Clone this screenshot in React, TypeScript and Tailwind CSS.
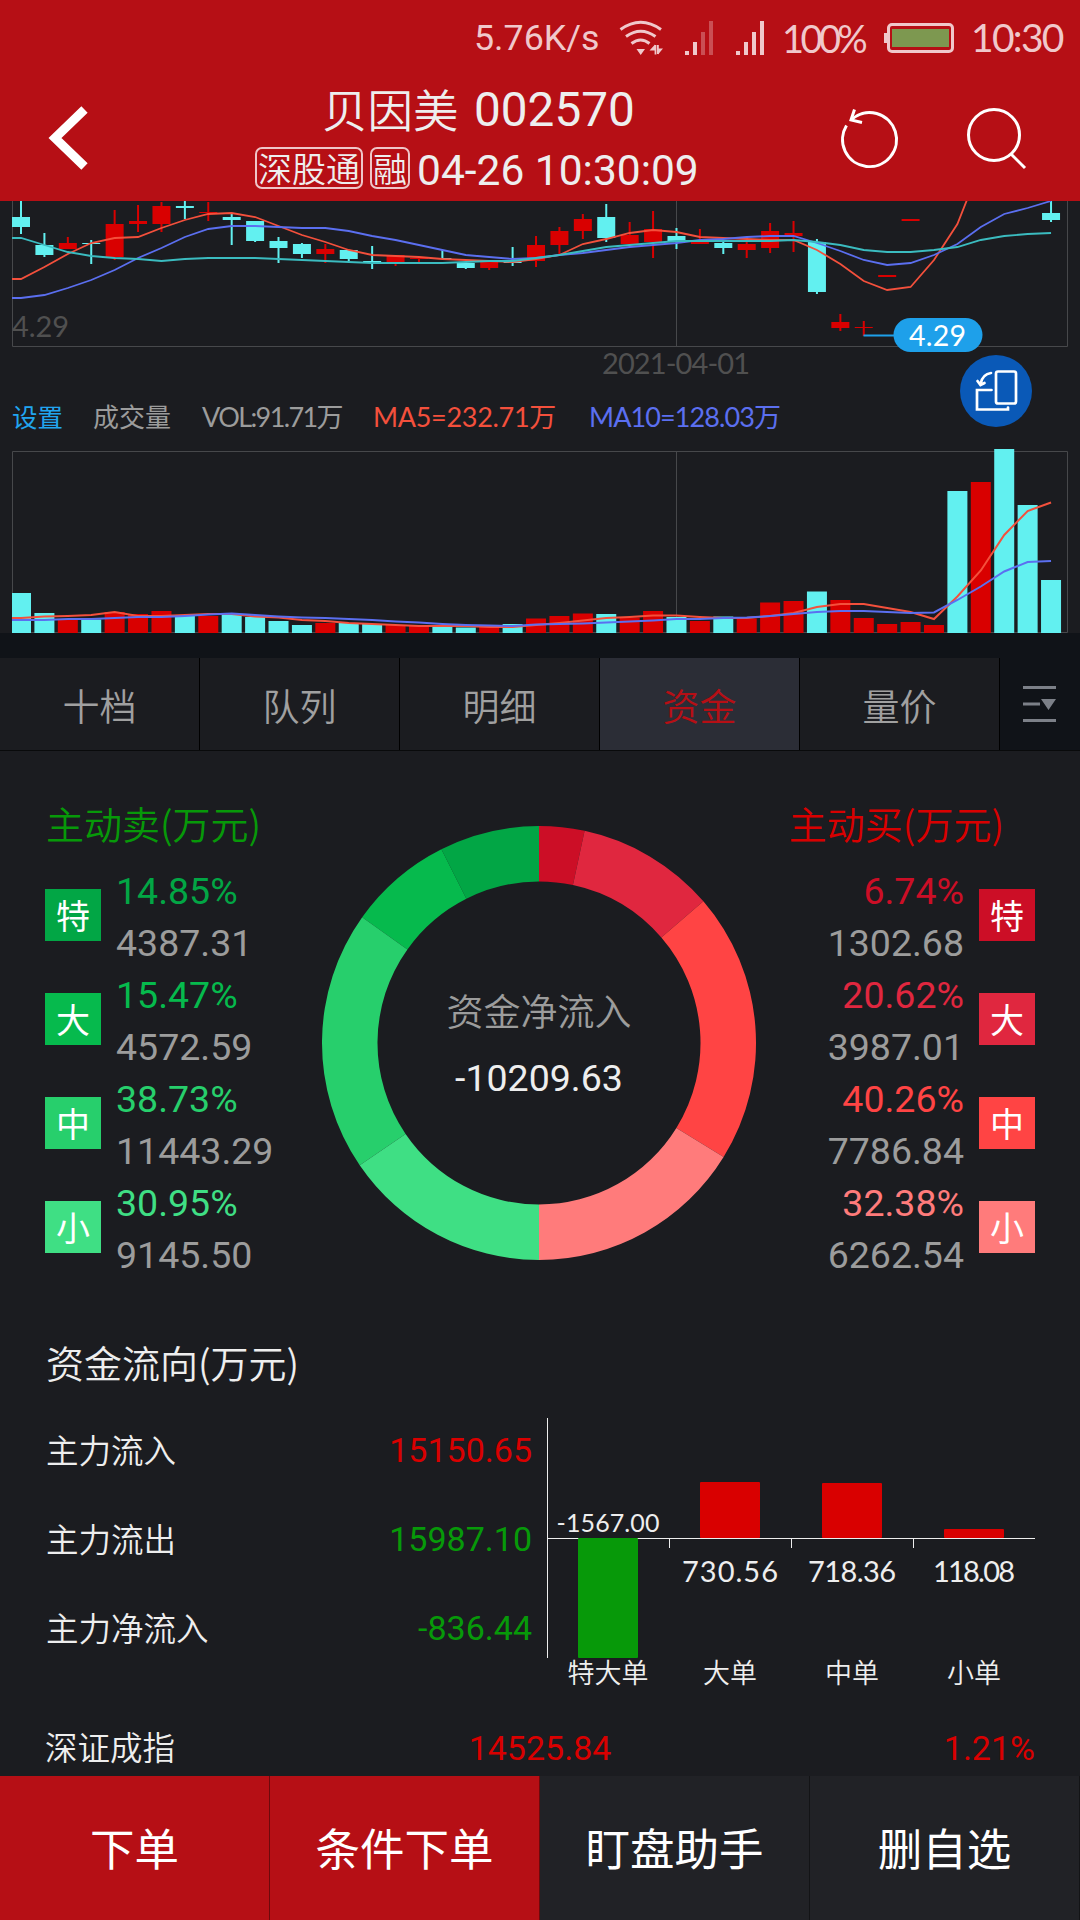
import type { ReactNode } from 'react'

type Candle = [color: string, high: number, top: number, bottom: number, low: number] | null

const UP = '#d90000'
const DOWN = '#62f0f0'
const STEP = 23.41

const r = (high: number, top: number, bottom: number, low: number): Candle => [UP, high, top, bottom, low]
const c = (high: number, top: number, bottom: number, low: number): Candle => [DOWN, high, top, bottom, low]

const candles: Candle[] = [
  c(201, 217, 227, 234), c(233, 245, 255, 257), r(237, 243, 249, 249), c(240, 243, 244, 264),
  r(210, 224, 257, 260), r(205, 221, 224, 232), r(202, 206, 224, 232), c(201, 206, 208, 219),
  r(202, 212, 213, 221), c(214, 217, 220, 245), c(221, 221, 241, 242), c(237, 241, 248, 263),
  c(243, 244, 254, 258), r(244, 249, 254, 263), c(250, 250, 259, 261), c(246, 261, 263, 269),
  r(255, 255, 263, 266), r(258, 258, 259, 264), c(250, 258, 259, 259), c(263, 263, 268, 269),
  r(262, 262, 268, 270), c(247, 262, 263, 266), r(236, 245, 261, 267), r(227, 231, 245, 254),
  r(214, 219, 231, 239), c(204, 217, 238, 242), r(222, 235, 244, 247), r(211, 229, 242, 258),
  c(228, 236, 241, 249), r(229, 242, 244, 244), c(242, 243, 248, 254), r(242, 244, 250, 258),
  r(223, 231, 248, 253), r(221, 233, 236, 252), c(239, 242, 292, 294), r(314, 322, 328, 331),
  r(321, 327, 328, 336), r(275, 275, 277, 277), r(219, 219, 221, 221),
  null, null, null, null, null,
  c(201, 213, 220, 222),
]

const priceLines = [
  { color: '#f4503c', values: [279, 267, 254, 243, 238, 237, 228, 220, 214, 213, 217, 226, 235, 242, 250, 255, 256, 257, 259, 260, 261, 262, 259, 255, 244, 239, 233, 230, 232, 237, 238, 239, 240, 240, 250, 264, 281, 290, 287, 260, 224, 165] },
  { color: '#5b6ff0', values: [298, 295, 288, 280, 270, 258, 248, 237, 229, 226, 226, 227, 228, 228, 231, 236, 240, 245, 250, 255, 257, 259, 258, 255, 253, 250, 247, 245, 243, 240, 239, 237, 236, 236, 243, 251, 260, 265, 263, 255, 244, 227, 214, 208, 201] },
  { color: '#3bbcc0', values: [238, 245, 252, 256, 258, 259, 261, 259, 258, 258, 258, 259, 260, 261, 262, 263, 263, 263, 263, 262, 261, 261, 258, 255, 251, 247, 245, 243, 241, 241, 241, 241, 241, 240, 242, 245, 250, 252, 252, 250, 247, 240, 236, 234, 233] },
]

const volumes: [number, boolean][] = [
  [593, false], [613, false], [619.5, true], [619.5, false], [612, true], [614, true], [611, true],
  [616, false], [616, true], [615, false], [617, false], [621, false], [625, false], [623, true],
  [623, false], [624, false], [625, true], [626, true], [627, false], [627.5, false], [627, true],
  [624, false], [618.5, true], [616, true], [613.5, true], [614, false], [617.5, true], [611, true],
  [617, false], [621, true], [616.5, false], [618.5, true], [602.5, true], [601, true], [591.5, false],
  [600, true], [618, true], [624, true], [622, true], [625, true], [491, false], [482, true],
  [449, false], [505, false], [580, false],
]

const volumeLines = [
  { color: '#f4503c', values: [618, 616.5, 616, 615, 612, 616, 616, 615, 614, 614, 616.5, 617.5, 620, 621, 623, 624, 625, 626, 626, 626, 627, 627, 625, 623, 620.5, 618, 617, 615.5, 615.5, 617, 618, 618, 616, 613, 607, 604, 604, 608, 612, 619, 596.5, 570.5, 535, 511, 502.5] },
  { color: '#5b6ff0', values: [620, 620, 619, 619, 618, 617, 617, 616, 614.5, 613.5, 615, 616.5, 617.5, 618, 619, 620, 621.5, 622.5, 624, 625, 625.5, 626, 624.5, 624, 623.5, 622.5, 621.5, 620.5, 619, 619, 618, 617.5, 616, 614, 612, 611, 611, 612, 613, 612.5, 600, 586.5, 571.5, 562, 561] },
]

const sells = [
  { label: '特', percent: 14.85, amount: '4387.31', fill: '#02a645', bg: 'bg-[#02a645]', text: 'text-[#02a645]' },
  { label: '大', percent: 15.47, amount: '4572.59', fill: '#06ba4d', bg: 'bg-[#06ba4d]', text: 'text-[#06ba4d]' },
  { label: '中', percent: 38.73, amount: '11443.29', fill: '#27cf6c', bg: 'bg-[#27cf6c]', text: 'text-[#27cf6c]' },
  { label: '小', percent: 30.95, amount: '9145.50', fill: '#3fdf84', bg: 'bg-[#3fdf84]', text: 'text-[#3fdf84]' },
]

const buys = [
  { label: '特', percent: 6.74, amount: '1302.68', fill: '#cc0e26', bg: 'bg-[#cc0e26]', text: 'text-[#cc0e26]' },
  { label: '大', percent: 20.62, amount: '3987.01', fill: '#e0273f', bg: 'bg-[#e0273f]', text: 'text-[#e0273f]' },
  { label: '中', percent: 40.26, amount: '7786.84', fill: '#ff4444', bg: 'bg-[#ff4444]', text: 'text-[#ff4444]' },
  { label: '小', percent: 32.38, amount: '6262.54', fill: '#ff7b7b', bg: 'bg-[#ff7b7b]', text: 'text-[#ff7b7b]' },
]

const x = (i: number) => 21 + i * STEP

function linePoints(values: number[]) {
  return `12,${values[0]} ` + values.map((v, i) => `${x(i)},${v}`).join(' ')
}

function Num({ children, className = '' }: { children: ReactNode; className?: string }) {
  return <span className={`font-['Roboto',sans-serif] font-normal ${className}`}>{children}</span>
}

function StatusBar() {
  return (
    <div className="flex h-[76px] items-center text-[#f0c8cb]">
      <Num className="mt-[2px] ml-[474px] w-[144px] text-[35.800px] leading-none">5.76K/s</Num>
      <svg className="mt-[-1px] h-9 w-[46px]" viewBox="618 19 46 36" fill="none" stroke="currentColor" strokeWidth="3">
        <path d="M620.500 28.500Q640.700 14 661 28.500M626 35.500Q640.700 25 655.500 35.500M631.500 42.500Q640.700 35.500 649.500 42.500" />
        <path d="M636.500 48H645L640.700 54ZM649.500 49.500L655 43.500V49.500ZM658 47.500H663L658 53.500Z" fill="currentColor" stroke="none" />
        <path d="M655.500 44V53.500M657.900 44V53" strokeWidth="1.800" />
      </svg>
      <svg className="ml-[21px] h-[34px] w-[80px]" viewBox="685 20 80 34" fill="currentColor">
        <path d="M685 50h4v4h-4zM693 41h4v13h-4zM736 50h4v4h-4zM744 41h4v13h-4zM752 31h4v23h-4zM760 20h4v34h-4z" />
        <path d="M701 31h4v23h-4zM709 20h4v34h-4z" opacity=".35" />
      </svg>
      <span className="ml-[17px] w-[102px] pb-[1px] font-['Lato',sans-serif] text-[38px] leading-none font-normal tracking-[-3.6px]">100%</span>
      <svg className="h-[30px] w-[70px]" viewBox="884 22 70 30">
        <rect x="884" y="32" width="5" height="10" fill="#f0c8cb" />
        <rect x="888.5" y="23.5" width="64" height="27" rx="3.5" fill="none" stroke="#f0c8cb" strokeWidth="3" />
        <rect x="892" y="28" width="57" height="18" fill="#7d9850" />
      </svg>
      <span className="ml-[17px] pb-[1px] font-['Lato',sans-serif] text-[39px] leading-none font-normal tracking-[-1.7px]">10:30</span>
    </div>
  )
}

function Tag({ children }: { children: ReactNode }) {
  return (
    <span className="flex h-[42px] items-center justify-center rounded-[7px] border-2 border-[#efc5c8] px-[1px] text-[34px] leading-none">
      {children}
    </span>
  )
}

function Header() {
  return (
    <header className="flex h-[201px] flex-col bg-[#b60f15] text-[#eeeeee]">
      <StatusBar />
      <div className="flex flex-1">
        <svg className="mt-[28px] ml-[47px] h-[68px] w-[44px]" viewBox="46 104 44 68" fill="none" stroke="#fff" strokeWidth="9">
          <path d="M83.500 109.500L54 138L83.500 166.500" />
        </svg>
        <div className="ml-[164px] flex w-[442px] flex-col">
          <div className="ml-[67px] flex h-[66px] items-center whitespace-nowrap">
            <span className="w-[152px] pb-[2px] text-[45.500px]">贝因美</span>
            <Num className="pt-[3px] text-[47.700px]">002570</Num>
          </div>
          <div className="mt-[5px] flex h-[42px] items-center gap-[7px] whitespace-nowrap">
            <Tag>深股通</Tag>
            <Tag>融</Tag>
            <Num className="pt-[5px] text-[42.500px]">04-26 10:30:09</Num>
          </div>
        </div>
        <svg className="mt-[31px] ml-[142px] h-[66px] w-[60px]" viewBox="840 106 60 66" fill="none" stroke="#fff" strokeWidth="3">
          <path d="M847.500 124.500A27 27 0 1 0 852.500 118.500" />
          <path d="M855.500 108.500L852 119L863 121.500" />
        </svg>
        <svg className="mt-[31px] ml-[67px] h-[66px] w-[62px]" viewBox="966 106 62 66" fill="none" stroke="#fff" strokeWidth="3">
          <circle cx="994" cy="134" r="25.500" />
          <path d="M1010.500 152.500L1025 167" />
        </svg>
      </div>
    </header>
  )
}

function PriceChart() {
  return (
    <svg className="block h-[179px] w-full font-normal" viewBox="0 201 1080 179">
      <path d="M12.500 201V346.500H1067.500V201M676.500 201V346" fill="none" stroke="#47484b" />
      <g fontFamily="Lato, sans-serif" fontSize="29">
        <text x="12" y="337" fill="#505050" textLength="57">4.29</text>
        <text x="602" y="373.500" fill="#505050" textLength="148">2021-04-01</text>
      </g>
      {candles.map((candle, i) => candle && (
        <g key={i} fill={candle[0]}>
          <rect x={x(i) - 1} y={candle[1]} width="2" height={candle[4] - candle[1]} />
          <rect x={x(i) - 9} y={candle[2]} width="18" height={Math.max(candle[3] - candle[2], 1)} />
        </g>
      ))}
      {priceLines.map(line => (
        <polyline key={line.color} points={linePoints(line.values)} fill="none" stroke={line.color} strokeWidth="1.8" />
      ))}
      <path d="M863.500 335.500H900" stroke="#1ea0ea" strokeWidth="2" />
      <rect x="893.500" y="318" width="89" height="34" rx="17" fill="#1ea0ea" />
      <text x="909" y="346" fill="#fff" fontFamily="Lato, sans-serif" fontSize="28.500" textLength="57">4.29</text>
    </svg>
  )
}

function Legend() {
  return (
    <div className="relative flex h-[71px] items-center pt-[3px] pl-[12px] font-['Lato','Noto_Sans_CJK_SC',sans-serif] text-[27px] font-normal whitespace-nowrap text-[#9c9c9c]">
      <span className="w-[81px] text-[25.500px] text-[#21a5f0]">设置</span>
      <span className="w-[109px] text-[26px]">成交量</span>
      <span className="w-[171px] tracking-[-1.6px]">VOL:91.71万</span>
      <span className="w-[216px] tracking-[-0.300px] text-[#f4503c]">MA5=232.71万</span>
      <span className="tracking-[-0.900px] text-[#5b6ff0]">MA10=128.03万</span>
      <div className="absolute top-[-25px] left-[960px] flex size-[72px] items-center justify-center rounded-full bg-[#0a59b7]">
        <svg className="size-[72px]" viewBox="960 355 72 72" fill="none" stroke="#fff" strokeWidth="2.700" strokeLinecap="round">
          <rect x="996" y="371.500" width="20" height="32" rx="2" />
          <path d="M991.500 390H977V409.500H1008V407.500M991 373Q982.500 374 980.500 384M977.500 381L980.500 385L984.500 383" />
        </svg>
      </div>
    </div>
  )
}

function VolumeChart() {
  return (
    <svg className="block h-[182px] w-full" viewBox="0 451 1080 182" overflow="visible">
      <path d="M12.500 632.500V451.500H1067.500V632.500ZM676.500 451V633" fill="none" stroke="#47484b" />
      {volumes.map(([top, up], i) => {
        const left = Math.max(x(i) - 10, 12)
        return <rect key={i} x={left} y={top} width={x(i) + 10 - left} height={633 - top} fill={up ? UP : DOWN} />
      })}
      {volumeLines.map(line => (
        <polyline key={line.color} points={linePoints(line.values)} fill="none" stroke={line.color} strokeWidth="2" />
      ))}
    </svg>
  )
}

function Tabs() {
  return (
    <nav className="flex h-[118px] border-b border-b-[#090a0b] bg-[#101318] pt-[25px] text-[37px] text-[#a0a0a0]">
      {['十档', '队列', '明细', '资金', '量价'].map(tab => (
        <div
          key={tab}
          className={`flex w-[200px] items-center justify-center border-r border-r-black pt-[3px] ${
            tab === '资金' ? 'bg-[#2b2d36] text-[#b60f15]' : 'bg-[#1b1c20]'
          }`}
        >
          {tab}
        </div>
      ))}
      <svg className="mt-[27px] ml-[22px] h-[38px] w-[36px]" viewBox="1022 685 36 38" fill="#7c8088">
        <path d="M1023 686h33v3h-33zM1023 702.500h17v3h-17zM1023 719h33v3h-33zM1041 699h15l-7.500 11z" />
      </svg>
    </nav>
  )
}

// Ring segments run down from the top: clockwise for buys, counter-clockwise for sells
function segments(items: typeof sells, side: 1 | -1) {
  let sum = 0
  return items.map(item => {
    const a = (sum / 100) * Math.PI
    sum += item.percent
    const b = (Math.min(sum, 100) / 100) * Math.PI
    const point = (angle: number, radius: number) =>
      `${217 + side * Math.sin(angle) * radius} ${217 - Math.cos(angle) * radius}`
    const out = side === 1 ? 1 : 0
    return (
      <path
        key={item.fill}
        d={`M${point(a, 217)}A217 217 0 0 ${out} ${point(b, 217)}L${point(b, 161.5)}A161.5 161.5 0 0 ${1 - out} ${point(a, 161.5)}Z`}
        fill={item.fill}
      />
    )
  })
}

function FlowList({ items, side }: { items: typeof sells; side: 'left' | 'right' }) {
  return (
    <div>
      {items.map(item => (
        <div key={item.label} className={`flex h-[104px] gap-[15px] ${side === 'right' ? 'flex-row-reverse text-right' : ''}`}>
          <span className={`mt-6 flex h-[52px] w-[56px] items-center justify-center text-[34px] leading-none font-normal text-white ${item.bg}`}>
            {item.label}
          </span>
          <Num className="flex flex-col text-[37.500px] leading-[52px] text-[#9c9c9c]">
            <span className={item.text}>{item.percent.toFixed(2)}%</span>
            <span>{item.amount}</span>
          </Num>
        </div>
      ))}
    </div>
  )
}

function FundRing() {
  return (
    <section className="flex h-[557px] justify-between px-[45px] pt-[48px]">
      <div className="w-[277px]">
        <h2 className="flex h-[66px] items-center pb-[20px] pl-[1px] text-[38px] whitespace-nowrap text-[#079909]">主动卖(万元)</h2>
        <FlowList items={sells} side="left" />
      </div>
      <div className="relative mt-[27px] size-[434px]">
        <svg className="size-full" viewBox="0 0 434 434">
          {segments(buys, 1)}
          {segments(sells, -1)}
        </svg>
        <div className="absolute inset-0 flex flex-col items-center pt-[156px] leading-none">
          <span className="text-[37px] leading-[56px] text-[#9c9c9c]">资金净流入</span>
          <Num className="mt-[22px] text-[37.500px] text-[#eeeeee]">-10209.63</Num>
        </div>
      </div>
      <div className="w-[279px]">
        <h2 className="flex h-[66px] items-center justify-end pr-[31px] pb-[20px] text-[38px] whitespace-nowrap text-[#d90000]">主动买(万元)</h2>
        <FlowList items={buys} side="right" />
      </div>
    </section>
  )
}

const orders = [
  { label: '特大单', value: '-1567.00', y: 1538, height: 120, size: 25, textY: 1531.5, width: 103 },
  { label: '大单', value: '730.56', y: 1482, height: 56, size: 29, textY: 1582, width: 96 },
  { label: '中单', value: '718.36', y: 1483, height: 55, size: 29, textY: 1582, width: 88 },
  { label: '小单', value: '118.08', y: 1529, height: 9, size: 29, textY: 1582, width: 82 },
]

function OrderChart() {
  return (
    <svg className="h-[290px] w-[493px]" viewBox="547 1410 493 290" fill="#eeeeee">
      <path d="M547.500 1418V1658M547 1538.500H1035M669.500 1538V1548M791.500 1538V1548M913.500 1538V1548" stroke="#eeeeee" />
      {orders.map((order, i) => {
        const center = 608 + i * 122
        return (
          <g key={order.label} textAnchor="middle">
            <rect x={center - 30} y={order.y} width="60" height={order.height} rx="1" fill={order.y === 1538 ? '#079909' : UP} />
            <text x={center} y={order.textY} fontFamily="Lato, sans-serif" fontWeight="400" fontSize={order.size} textLength={order.width}>{order.value}</text>
            <text x={center} y="1683" fontSize="27">{order.label}</text>
          </g>
        )
      })}
    </svg>
  )
}

function FundFlow() {
  const rows = [
    ['主力流入', '15150.65', 'text-[#d90000]'],
    ['主力流出', '15987.10', 'text-[#079909]'],
    ['主力净流入', '-836.44', 'text-[#079909]'],
  ]
  return (
    <section className="flex h-[392px] text-[#eeeeee]">
      <div className="flex w-[547px] flex-col pr-[15px] pl-[46px]">
        <h2 className="mt-[26px] mb-[15px] text-[38px] leading-[56px]">资金流向(万元)</h2>
        {rows.map(([label, value, color]) => (
          <div key={label} className="flex h-[89px] items-center justify-between">
            <span className="text-[32.500px]">{label}</span>
            <Num className={`pt-[2px] text-[34px] ${color}`}>{value}</Num>
          </div>
        ))}
      </div>
      <div className="mt-[102px]">
        <OrderChart />
      </div>
    </section>
  )
}

export default function App() {
  return (
    <div className="flex h-[1920px] w-[1080px] flex-col overflow-hidden bg-[#1b1c20] font-['Noto_Sans_CJK_SC',sans-serif] font-[350]">
      <Header />
      <PriceChart />
      <Legend />
      <VolumeChart />
      <Tabs />
      <FundRing />
      <FundFlow />
      <div className="grid h-[76px] grid-cols-3 items-center px-[45px] pt-[20px] text-[34px] text-[#d90000]">
        <span className="pb-[3px] text-[32.500px] leading-none text-[#eeeeee]">深证成指</span>
        <Num className="pb-[1px] text-center leading-none">14525.84</Num>
        <Num className="pb-[1px] text-right leading-none">1.21%</Num>
      </div>
      <footer className="grid h-[144px] grid-cols-4 text-[44.500px] font-normal text-white">
        {['下单', '条件下单', '盯盘助手', '删自选'].map((label, i) => (
          <button
            key={label}
            className={`flex items-center justify-center border-r border-r-black/40 pb-[1px] ${i < 2 ? 'bg-[#b60f15]' : 'bg-[#212226]'}`}
          >
            {label}
          </button>
        ))}
      </footer>
    </div>
  )
}
